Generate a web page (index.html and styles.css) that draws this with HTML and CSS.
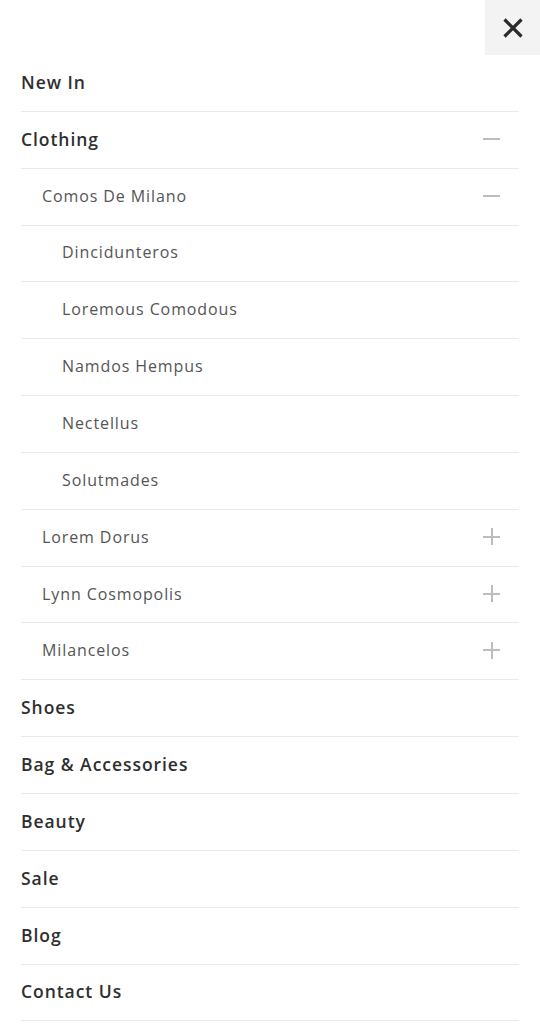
FILE: index.html
```html
<!DOCTYPE html>
<html>
<head>
<meta charset="utf-8">
<link rel="stylesheet" href="styles.css">
</head>
<body>
<div class="panel">
  <div class="topbar">
    <button class="close" aria-label="Close">
      <svg width="22" height="22" viewBox="0 0 22 22"><path d="M2.5 2.5 L19.5 19.5 M19.5 2.5 L2.5 19.5" stroke="#2b2b2b" stroke-width="3.2" stroke-linecap="butt" fill="none"/></svg>
    </button>
  </div>
  <ul class="menu">
    <li class="row l1"><span>New In</span></li>
    <li class="row l1"><span>Clothing</span><i class="ico minus"></i></li>
    <li class="row l2"><span>Comos De Milano</span><i class="ico minus"></i></li>
    <li class="row l3"><span>Dincidunteros</span></li>
    <li class="row l3"><span>Loremous Comodous</span></li>
    <li class="row l3"><span>Namdos Hempus</span></li>
    <li class="row l3"><span>Nectellus</span></li>
    <li class="row l3"><span>Solutmades</span></li>
    <li class="row l2"><span>Lorem Dorus</span><i class="ico plus"></i></li>
    <li class="row l2"><span>Lynn Cosmopolis</span><i class="ico plus"></i></li>
    <li class="row l2"><span>Milancelos</span><i class="ico plus"></i></li>
    <li class="row l1"><span>Shoes</span></li>
    <li class="row l1"><span>Bag &amp; Accessories</span></li>
    <li class="row l1"><span>Beauty</span></li>
    <li class="row l1"><span>Sale</span></li>
    <li class="row l1"><span>Blog</span></li>
    <li class="row l1"><span>Contact Us</span></li>
  </ul>
</div>
</body>
</html>
```
FILE: styles.css
```css
* { box-sizing: border-box; }
html, body { margin: 0; padding: 0; background: #fff; }
body { font-family: "Open Sans", "Liberation Sans", sans-serif; color: #2f2f2f; }
.panel { width: 540px; }
.topbar { display: flex; justify-content: flex-end; height: 55px; }
.close {
  width: 55px; height: 55px; border: 0; padding: 0; margin: 0;
  background: #f3f3f3; display: flex; align-items: center; justify-content: center;
}
.menu { list-style: none; margin: 0 21px; padding: 0; }
.row {
  height: 56.85px; border-bottom: 1px solid #e9e9e9;
  display: flex; align-items: center; justify-content: space-between;
  padding: 0 19px 2px 0;
}
.l1 { font-size: 17.5px; font-weight: 600; color: #2f2f2f; letter-spacing: 0.95px; }
.l2 { font-size: 16px; font-weight: 400; color: #555; padding-left: 21px; letter-spacing: 0.9px; }
.l3 { font-size: 16px; font-weight: 400; color: #555; padding-left: 41px; letter-spacing: 0.9px; }
.ico { position: relative; width: 17px; height: 17px; display: block; }
.ico::before, .ico::after { content: ""; position: absolute; background: #bdbdbd; }
.ico::before { left: 0; right: 0; top: 7.5px; height: 2px; }
.plus::after { top: 0; bottom: 0; left: 7.5px; width: 2px; }
```
